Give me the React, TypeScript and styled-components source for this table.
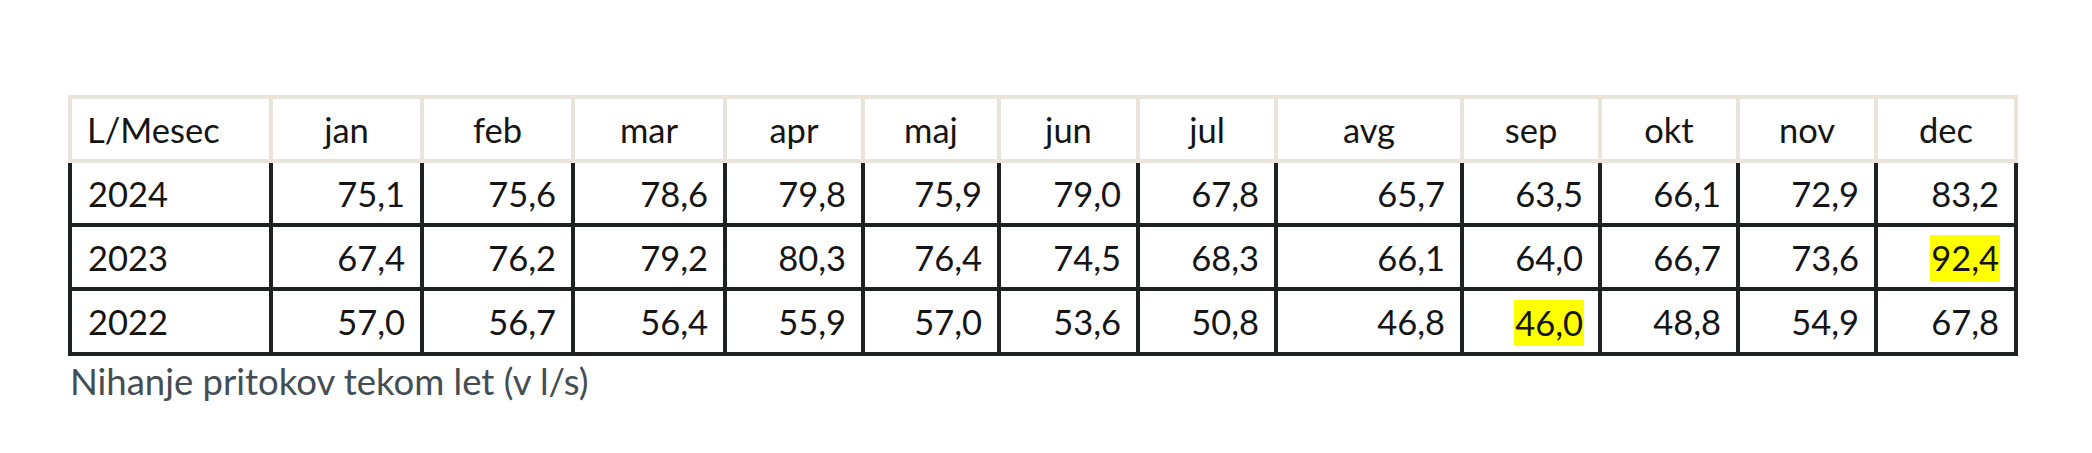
import styled, { createGlobalStyle } from "styled-components";

const GlobalStyle = createGlobalStyle`
  html, body {
    margin: 0;
    padding: 0;
    background: #ffffff;
  }
`;

const months = ["jan", "feb", "mar", "apr", "maj", "jun", "jul", "avg", "sep", "okt", "nov", "dec"];

// column widths measured between border centres
const widths = [199, 151, 151, 152, 138, 136, 139, 138, 186, 138, 138, 138, 138];

type Row = {
  year: string;
  values: string[];
  marked?: number;
};

const rows: Row[] = [
  { year: "2024", values: ["75,1", "75,6", "78,6", "79,8", "75,9", "79,0", "67,8", "65,7", "63,5", "66,1", "72,9", "83,2"] },
  { year: "2023", values: ["67,4", "76,2", "79,2", "80,3", "76,4", "74,5", "68,3", "66,1", "64,0", "66,7", "73,6", "92,4"], marked: 11 },
  { year: "2022", values: ["57,0", "56,7", "56,4", "55,9", "57,0", "53,6", "50,8", "46,8", "46,0", "48,8", "54,9", "67,8"], marked: 8 },
];

const Page = styled.div`
  padding: 95px 0 0 68px;
  font-family: Lato, "Liberation Sans", sans-serif;
  color: #151515;
`;

const Figure = styled.figure`
  margin: 0;
  width: 1946px;
`;

const Table = styled.table`
  width: 1946px;
  border-collapse: collapse;
  table-layout: fixed;
  font-size: 34.5px;
`;

const HeadCell = styled.th<{ $align: "left" | "center" }>`
  height: 60px;
  padding: 0 15px;
  border: 4px solid #e9e5dd;
  font-weight: 400;
  text-align: ${({ $align }) => $align};
  vertical-align: middle;
`;

const Cell = styled.td<{ $align: "left" | "right"; $last?: boolean }>`
  height: ${({ $last }) => ($last ? 61 : 60)}px;
  padding: 0 15px 0 16px;
  border: 4px solid #1f2222;
  text-align: ${({ $align }) => $align};
  vertical-align: middle;
  white-space: nowrap;
`;

const Mark = styled.mark`
  display: inline-block;
  padding: 0 1px;
  margin-right: -1px;
  line-height: 46px;
  background: #ffff00;
  color: inherit;
  vertical-align: middle;
`;

const Caption = styled.figcaption`
  margin-top: 3px;
  padding-left: 2px;
  font-size: 36.5px;
  line-height: 44px;
  color: #444d54;
`;

export default function App() {
  return (
    <>
      <GlobalStyle />
      <Page>
        <Figure>
          <Table>
            <colgroup>
              {widths.map((w, i) => (
                <col key={i} style={{ width: w + (i === 0 || i === widths.length - 1 ? 2 : 0) }} />
              ))}
            </colgroup>
            <thead>
              <tr>
                <HeadCell $align="left">L/Mesec</HeadCell>
                {months.map((m) => (
                  <HeadCell key={m} $align="center">
                    {m}
                  </HeadCell>
                ))}
              </tr>
            </thead>
            <tbody>
              {rows.map((row, r) => {
                const last = r === rows.length - 1;
                return (
                  <tr key={row.year}>
                    <Cell $align="left" $last={last}>
                      {row.year}
                    </Cell>
                    {row.values.map((v, i) => (
                      <Cell key={i} $align="right" $last={last}>
                        {row.marked === i ? <Mark>{v}</Mark> : v}
                      </Cell>
                    ))}
                  </tr>
                );
              })}
            </tbody>
          </Table>
          <Caption>Nihanje pritokov tekom let (v l/s)</Caption>
        </Figure>
      </Page>
    </>
  );
}
